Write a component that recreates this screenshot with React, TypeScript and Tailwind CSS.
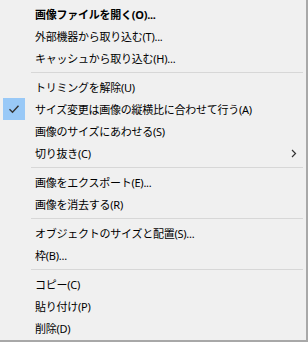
import React from "react";

type Item = { label: string; bold?: boolean; checked?: boolean; sub?: boolean } | "sep";

const items: Item[] = [
  { label: "画像ファイルを開く(O)...", bold: true },
  { label: "外部機器から取り込む(T)..." },
  { label: "キャッシュから取り込む(H)..." },
  "sep",
  { label: "トリミングを解除(U)" },
  { label: "サイズ変更は画像の縦横比に合わせて行う(A)", checked: true },
  { label: "画像のサイズにあわせる(S)" },
  { label: "切り抜き(C)", sub: true },
  "sep",
  { label: "画像をエクスポート(E)..." },
  { label: "画像を消去する(R)" },
  "sep",
  { label: "オブジェクトのサイズと配置(S)..." },
  { label: "枠(B)..." },
  "sep",
  { label: "コピー(C)" },
  { label: "貼り付け(P)" },
  { label: "削除(D)" },
];

export default function App() {
  return (
    <div
      className="w-[308px] h-[342px] bg-[#f0f0f0] border-r-2 border-b-2 border-[#a8a8a8] flex flex-col pt-[3px] text-[11px] text-black"
      style={{ fontFamily: '"Noto Sans", "Noto Sans CJK JP", sans-serif' }}
    >
      {items.map((it, i) =>
        it === "sep" ? (
          <div key={i} className="h-[7px] flex items-center pl-[31px] pr-[3px]">
            <div className="h-px w-full bg-[#d7d7d7]" />
          </div>
        ) : (
          <div key={i} className="h-[22px] flex items-center relative">
            <div className="w-[35px] h-[22px] flex items-center pl-[3px]">
              {it.checked && (
                <div className="w-[22px] h-[22px] bg-[#99c9f7] flex items-center justify-center">
                  <svg width="12" height="10" viewBox="0 0 12 10">
                    <path d="M1.5 5.2 L4.5 8.2 L10.5 1.8" fill="none" stroke="#333" strokeWidth="1.4" />
                  </svg>
                </div>
              )}
            </div>
            <span className={`tracking-[-0.25px] leading-none ${it.bold ? "font-bold" : ""}`}>{it.label}</span>
            {it.sub && (
              <svg className="absolute left-[291px] top-[7px]" width="6" height="9" viewBox="0 0 6 9">
                <path d="M1 1 L4.5 4.5 L1 8" fill="none" stroke="#333" strokeWidth="1.2" />
              </svg>
            )}
          </div>
        )
      )}
    </div>
  );
}
